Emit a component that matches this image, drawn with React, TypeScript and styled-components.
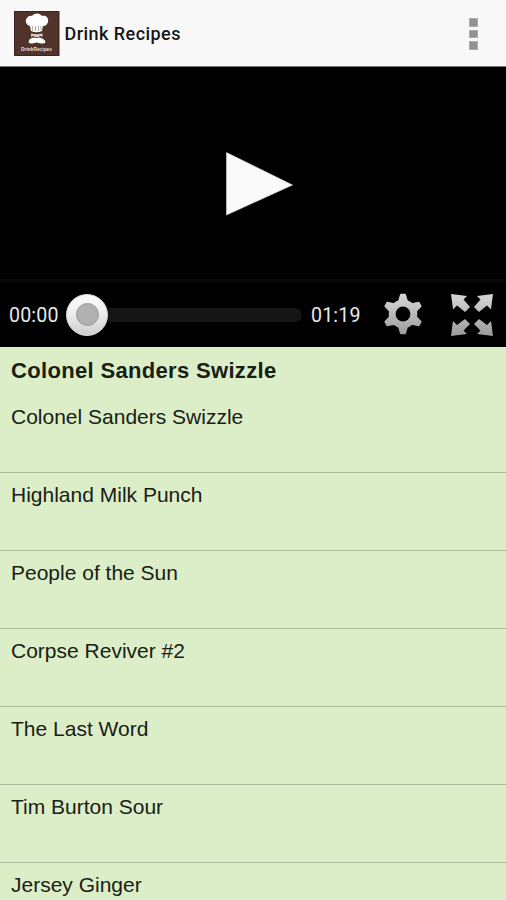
import React from "react";
import styled, { createGlobalStyle } from "styled-components";

const GlobalStyle = createGlobalStyle`
  * { box-sizing: border-box; }
  body { margin: 0; background: #dceec8; }
  svg { display: block; flex: none; }
`;

const Screen = styled.main`
  width: 506px;
  height: 900px;
  overflow: hidden;
  display: flex;
  flex-direction: column;
  background: #dceec8;
  color: #182016;
  font-family: "Liberation Sans", Arial, sans-serif;
`;

const AppBar = styled.header`
  flex: none;
  height: 67px;
  display: flex;
  align-items: center;
  padding: 2px 28px 0 14px;
  background: #f8f8f8;
  border-bottom: 1px solid #777;
`;

const AppTitle = styled.h1`
  flex: 1;
  margin: 0 0 0 4.5px;
  font: 500 18px/24px Roboto, sans-serif;
  letter-spacing: 0.45px;
  color: #161616;
  white-space: nowrap;
`;

const MenuButton = styled.button`
  display: flex;
  flex-direction: column;
  gap: 3px;
  padding: 0;
  border: 0;
  background: none;
`;

const MenuDot = styled.span`
  width: 9px;
  height: 8.7px;
  background: #929292;
  border: 1px solid #acacac;
`;

const Player = styled.section`
  flex: none;
  height: 280px;
  display: flex;
  flex-direction: column;
  background: #000;
`;

const Video = styled.div`
  height: 212px;
  padding: 84px 0 0 225px;
`;

const Controls = styled.div`
  flex: 1;
  display: flex;
  align-items: center;
  padding: 0 12px 0 9px;
  border-top: 3px solid #070707;
`;

const Time = styled.span<{ $width: number }>`
  width: ${(p) => p.$width}px;
  flex: none;
  padding-top: 2px;
  font: 400 19.6px/24px Roboto, sans-serif;
  letter-spacing: 0.15px;
  color: #e8e8e8;
  white-space: nowrap;
`;

const Seek = styled.div`
  width: 236px;
  margin-right: 9px;
  flex: none;
  display: flex;
  align-items: center;
`;

const Thumb = styled.span`
  width: 42px;
  height: 42px;
  flex: none;
  display: grid;
  place-items: center;
  border-radius: 50%;
  background: linear-gradient(#fbfbfb, #eeeeee 45%, #cecece);
  border: 1px solid #ddd;

  &::after {
    content: "";
    width: 21px;
    height: 21px;
    border-radius: 50%;
    background: #b0b0b0;
    border: 1px solid #9c9c9c;
  }
`;

const Track = styled.span`
  flex: 1;
  height: 14px;
  border-radius: 0 7px 7px 0;
  background: #151515;
`;

const IconButton = styled.button<{ $gap: number }>`
  padding: 0;
  margin: 0 0 0 ${(p) => p.$gap}px;
  border: 0;
  background: none;
`;

const NowPlaying = styled.h2`
  flex: none;
  height: 48px;
  margin: 0;
  padding: 11px 11px 0;
  font-size: 22px;
  letter-spacing: 0.33px;
  line-height: 26px;
  font-weight: 700;
`;

const List = styled.ul`
  margin: 0;
  padding: 0;
  list-style: none;
`;

const Recipe = styled.li`
  height: 78px;
  padding: 10px 11px 0;
  font-size: 21px;
  line-height: 24px;
  border-bottom: 1px solid #a9b999;
`;

const ChefLogo = () => (
  <svg width="46" height="46" viewBox="0 0 46 46">
    <rect x="0.5" y="0.5" width="44.5" height="44" fill="#50332a" stroke="#3e241c" />
    <path
      fill="#fff"
      d="M16 15C12 14 10.500 9.500 13 7C14 5 17 4.500 18 5C20 1.500 26 1.500 28 5C32 4 35 7 34 11C33 14 31 15 29 15L28 20Q22.500 22.500 17 20Z"
    />
    <path d="M18.500 15v4.500M21.500 15v5M24.500 15v5M27 15v4" stroke="#9b8780" strokeWidth="0.700" />
    <path d="M17 22.500Q23 24 28.500 22.500V26Q26 24 24.500 26H21Q19 24 17 26Z" fill="#d7ccc8" />
    <path
      fill="#fff"
      d="M22.500 27Q19 25.500 16 28Q15 29 14.500 31Q15.500 33 18.500 32.500L22.500 31.500L27 32.500Q31 33 31.500 31Q31 29 29 28Q26 25.500 22.500 27Z"
    />
    <text
      x="22.500"
      y="40"
      textAnchor="middle"
      textLength="31"
      lengthAdjust="spacingAndGlyphs"
      fontFamily="Liberation Sans"
      fontSize="5.500"
      fontWeight="700"
      fill="#e9dfda"
    >
      DrinkRecipes
    </text>
  </svg>
);

const PlayIcon = () => (
  <svg width="70" height="66" viewBox="0 0 70 66">
    <path d="M1.500 1.500L67.500 34L1.500 64Z" fill="#fafafa" stroke="#ddd" strokeWidth="0.600" />
  </svg>
);

const Metal = ({ id }: { id: string }) => (
  <defs>
    <linearGradient id={id} x1="0" y1="0" x2="0" y2="44" gradientUnits="userSpaceOnUse">
      <stop offset="0" stopColor="#d8d8d8" />
      <stop offset="1" stopColor="#999" />
    </linearGradient>
  </defs>
);

const GearIcon = () => (
  <svg width="40" height="44" viewBox="0 0 40 44">
    <Metal id="gear" />
    <mask id="gearShape" maskUnits="userSpaceOnUse" x="0" y="0" width="40" height="44">
      <circle cx="20" cy="21" r="14.3" fill="#fff" />
      <g fill="#fff" stroke="#fff" strokeWidth="2" strokeLinejoin="round">
        {[0, 60, 120, 180, 240, 300].map((angle) => (
          <path
            key={angle}
            transform={`rotate(${angle} 20 21)`}
            d="M18 1.800H22L24 8.500H16Z"
          />
        ))}
      </g>
      <circle cx="20" cy="21" r="7.4" fill="#000" />
    </mask>
    <rect width="40" height="44" fill="url(#gear)" mask="url(#gearShape)" />
  </svg>
);

const ExpandIcon = () => (
  <svg width="44" height="44" viewBox="0 0 44 44">
    <Metal id="expand" />
    <g fill="url(#expand)">
      <path d="M1 1L17 3L13.500 6.500L20 14L15 19L7 12.500L3 16.500Z" />
      <path d="M43 1L27 3L30.500 6.500L24 14L29 19L37 12.500L41 16.500Z" />
      <path d="M1 43L17 41L13.500 37.500L20 31L15 26L7 32L3 28Z" />
      <path d="M43 43L27 41L30.500 37.500L24 31L29 26L37 32L41 28Z" />
    </g>
  </svg>
);

const recipes = [
  "Colonel Sanders Swizzle",
  "Highland Milk Punch",
  "People of the Sun",
  "Corpse Reviver #2",
  "The Last Word",
  "Tim Burton Sour",
  "Jersey Ginger",
];

export default function App() {
  return (
    <Screen>
      <GlobalStyle />
      <AppBar>
        <ChefLogo />
        <AppTitle>Drink Recipes</AppTitle>
        <MenuButton aria-label="Menu">
          <MenuDot />
          <MenuDot />
          <MenuDot />
        </MenuButton>
      </AppBar>
      <Player>
        <Video>
          <PlayIcon />
        </Video>
        <Controls>
          <Time $width={57}>00:00</Time>
          <Seek>
            <Thumb />
            <Track />
          </Seek>
          <Time $width={50}>01:19</Time>
          <IconButton $gap={22} aria-label="Settings">
            <GearIcon />
          </IconButton>
          <IconButton $gap={27} aria-label="Full screen">
            <ExpandIcon />
          </IconButton>
        </Controls>
      </Player>
      <NowPlaying>Colonel Sanders Swizzle</NowPlaying>
      <List>
        {recipes.map((name) => (
          <Recipe key={name}>{name}</Recipe>
        ))}
      </List>
    </Screen>
  );
}
